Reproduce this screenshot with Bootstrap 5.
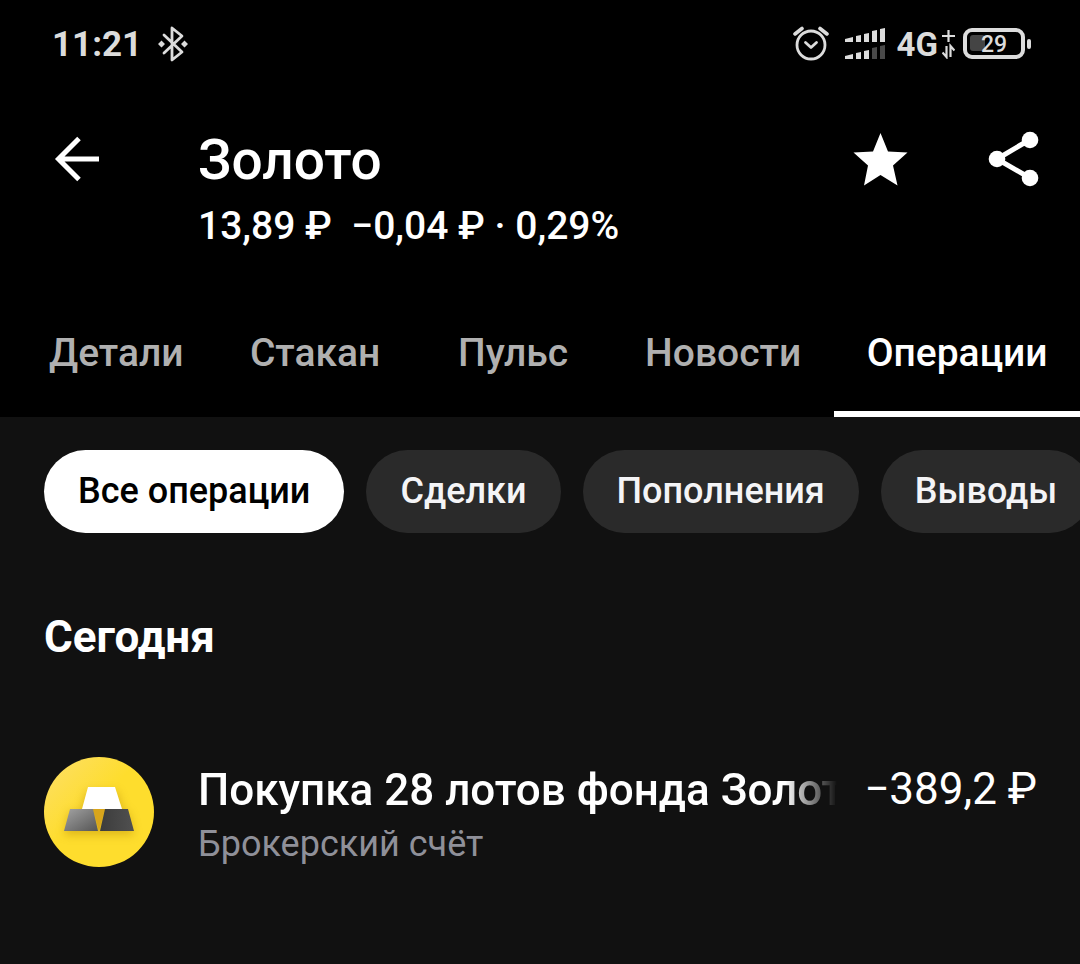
<!DOCTYPE html>
<html lang="ru" data-bs-theme="dark">
<head>
<meta charset="utf-8">
<meta name="viewport" content="width=device-width, initial-scale=1">
<title>Золото</title>
<link href="https://cdn.jsdelivr.net/npm/bootstrap@5.3.0/dist/css/bootstrap.min.css" rel="stylesheet">
<style>
  body { background: #111; color: #fff; font-family: Roboto, "Noto Sans", sans-serif; }
  svg { display: block; flex: none; }
  .top-area { background: #000; }
  .status-bar { height: 88px; padding: 0 49px 0 52px; color: #dcdcdc; font-size: 35px; font-weight: 700; }
  .clock { padding-top: 3px; }
  .network { font-size: 33px; line-height: 40px; padding-top: 2px; }
  .asset-bar { padding: 40px 41px 50px 54px; }
  .asset-info { margin-left: 98px; }
  .asset-title { font-size: 55px; line-height: 64px; font-weight: 500; }
  .asset-price { font-size: 39px; line-height: 48px; font-weight: 500; margin-top: 10px; white-space: pre; }
  .asset-actions { gap: 80px; }
  .icon-btn { color: #fff; background: none; border: 0; padding: 0; }
  .asset-tabs { padding-left: 16px; }
  .asset-tabs .nav-link { min-width: 198px; padding: 29px 33px 34px; border-bottom: 6px solid transparent; text-align: center;
    color: #b0b0b0; font-size: 39px; line-height: 48px; font-weight: 500; white-space: nowrap; }
  .asset-tabs .nav-link.active { color: #fff; border-color: #fff; }
  .filters { gap: 22px; padding: 33px 0 0 44px; }
  .filter-btn { flex: none; padding: 17px 34px 18px; border: 0; border-radius: 42px; background: #2a2a2a; color: #f4f4f6;
    font-size: 36px; line-height: 48px; font-weight: 500; white-space: nowrap; }
  .filter-btn.active { background: #fff; color: #000; }
  .day-title { margin: 76px 44px 0; font-size: 44px; line-height: 56px; font-weight: 700; }
  .operation { gap: 44px; padding: 92px 43px 0 44px; }
  .op-text { min-width: 0; padding-top: 5px; }
  .op-name { font-size: 44px; line-height: 56px; font-weight: 500; white-space: nowrap; overflow: hidden;
    -webkit-mask-image: linear-gradient(to left, transparent, #000 52px); mask-image: linear-gradient(to left, transparent, #000 52px); }
  .op-account { font-size: 36px; line-height: 52px; color: #8f9099; }
  .op-sum { font-size: 44px; line-height: 56px; margin-left: -17px; padding-top: 4px; white-space: nowrap; }
</style>
</head>
<body class="overflow-x-hidden">
<header class="top-area overflow-hidden">
  <div class="status-bar d-flex align-items-center justify-content-between">
    <div class="d-flex align-items-center gap-3">
      <span class="clock">11:21</span>
      <svg width="30" height="36" viewBox="0 0 30 36" fill="none" stroke="currentColor" stroke-width="2.8" stroke-linejoin="round" stroke-linecap="round"><path d="M6 9 24 26 14 34V2L24 10 6 27"/><path d="M0 18 3.500 14.500 7 18 3.500 21.500ZM23 18 26.500 14.500 30 18 26.500 21.500Z" fill="currentColor" stroke-width="0"/></svg>
    </div>
    <div class="d-flex align-items-center">
      <svg width="36" height="36" viewBox="0 0 36 36" fill="none" stroke="currentColor" stroke-width="2.800" stroke-linecap="round" stroke-linejoin="round"><circle cx="18" cy="19" r="14"/><path d="M12.500 16.500 18 21.500 23.500 16.500"/><path stroke-width="3.600" d="M2 8 9 2.500M34 8 27 2.500"/></svg>
      <svg class="ms-3" width="40" height="32" viewBox="0 0 40 32" fill="currentColor"><path d="M0 11 8 9V14H0ZM11 8 16 7V14H11ZM19 6 24 5V14H19ZM27 3 32 2V14H27ZM35 1 40 0V14H35ZM0 28 8 26V31H0ZM11 25 16 24V31H11ZM19 23 24 22V31H19Z"/><path fill="#4a4a4a" d="M27 20 32 19V31H27ZM35 18 40 17V31H35Z"/></svg>
      <span class="network ms-2 ps-1">4G</span>
      <svg class="ms-1" width="13" height="30" viewBox="0 0 13 30" fill="none" stroke="currentColor" stroke-width="2.200"><path d="M6.500 1V13M0 7H13M4.500 17V28L.500 23.500M8.500 28V17L12.500 21.500"/></svg>
      <svg class="ms-2" width="68" height="32" viewBox="0 0 68 32"><rect x="2" y="2" width="58" height="27" rx="7" fill="none" stroke="currentColor" stroke-width="4"/><rect x="7" y="7" width="15" height="16" rx="3" fill="#444"/><rect x="64" y="11" width="4" height="10" rx="2" fill="currentColor"/><text x="31" y="24" text-anchor="middle" font-size="23" font-weight="500" fill="currentColor">29</text></svg>
    </div>
  </div>

  <div class="asset-bar d-flex">
    <button class="icon-btn align-self-start mt-2" type="button" aria-label="Назад">
      <svg width="46" height="46" viewBox="0 0 46 46" fill="none" stroke="currentColor" stroke-width="5"><path d="M25 2.500 4.500 23 25 43.500M4.500 23H45"/></svg>
    </button>
    <div class="asset-info flex-grow-1">
      <h1 class="asset-title mb-0">Золото</h1>
      <div class="asset-price">13,89 ₽  −0,04 ₽ · 0,29%</div>
    </div>
    <div class="asset-actions d-flex align-self-start">
      <button class="icon-btn" type="button" aria-label="В избранное">
        <svg width="55" height="60" viewBox="0 0 55 60" fill="currentColor"><path d="M27.500 5 35 23.500 54.500 24.500 40 37.500 44.500 57.500 27.500 47 11 57.500 15 37.500.500 24.500 20 23.500Z"/></svg>
      </button>
      <button class="icon-btn" type="button" aria-label="Поделиться">
        <svg width="51" height="60" viewBox="0 0 51 60" fill="currentColor"><path d="M42 11.500 9 31 42 50" fill="none" stroke="currentColor" stroke-width="5"/><circle cx="42" cy="12" r="8.300"/><circle cx="9" cy="31" r="8.300"/><circle cx="42" cy="50" r="8.300"/></svg>
      </button>
    </div>
  </div>

  <nav class="asset-tabs nav flex-nowrap">
    <a class="nav-link" href="#">Детали</a>
    <a class="nav-link" href="#">Стакан</a>
    <a class="nav-link" href="#">Пульс</a>
    <a class="nav-link" href="#">Новости</a>
    <a class="nav-link active" href="#" aria-current="page">Операции</a>
  </nav>
</header>

<main>
  <div class="filters d-flex overflow-hidden">
    <button class="filter-btn active" type="button">Все операции</button>
    <button class="filter-btn" type="button">Сделки</button>
    <button class="filter-btn" type="button">Пополнения</button>
    <button class="filter-btn" type="button">Выводы</button>
  </div>

  <h2 class="day-title">Сегодня</h2>

  <div class="operation d-flex">
    <svg width="110" height="110" viewBox="0 0 110 110">
      <defs>
        <linearGradient id="gold" x1="0" y1="0" x2="1" y2="1"><stop offset="0" stop-color="#fddf6a"/><stop offset=".45" stop-color="#fedd2d"/></linearGradient>
        <linearGradient id="silver" x1="0" y1="0" x2="1" y2="1"><stop offset="0" stop-color="#a3a3a3"/><stop offset="1" stop-color="#555"/></linearGradient>
        <linearGradient id="steel"><stop offset="0" stop-color="#3c3c3c"/><stop offset="1" stop-color="#505050"/></linearGradient>
        <filter id="soft" x="-30%" y="-30%" width="160%" height="170%"><feGaussianBlur stdDeviation="5"/></filter>
      </defs>
      <circle cx="55" cy="55" r="55" fill="url(#gold)"/>
      <path d="M43 34H73L80 55H85L90 78H20L25 55H36Z" fill="#a87800" opacity=".38" filter="url(#soft)"/>
      <path d="M49 52H61L55 74Z" fill="#d8a51c"/>
      <path d="M44 30H71L78 52H38Z" fill="#fff"/>
      <path d="M26 52H49L54 74H20Z" fill="url(#silver)"/>
      <path d="M61 52H84L90 74H56Z" fill="url(#steel)"/>
    </svg>
    <div class="op-text flex-grow-1">
      <div class="op-name">Покупка 28 лотов фонда Золото</div>
      <div class="op-account">Брокерский счёт</div>
    </div>
    <div class="op-sum">−389,2 ₽</div>
  </div>
</main>
<script src="https://cdn.jsdelivr.net/npm/bootstrap@5.3.0/dist/js/bootstrap.bundle.min.js"></script>
</body>
</html>
